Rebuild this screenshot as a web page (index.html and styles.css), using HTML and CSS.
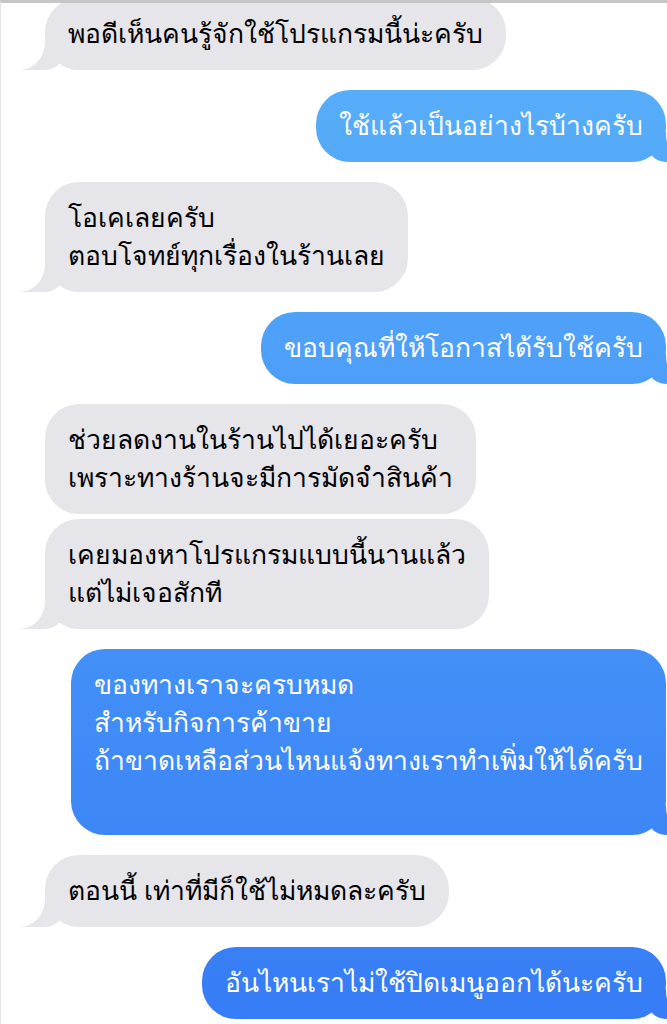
FILE: index.html
```html
<!DOCTYPE html>
<html>
<head>
    <title>แชท</title>
    <meta charset="utf-8">
    <link rel="stylesheet" href="styles.css">
</head>
<body>
    <div id="frame">
        <div class="chat">
            <div class="msg them">พอดีเห็นคนรู้จักใช้โปรแกรมนี้น่ะครับ</div>
            <div class="msg me">ใช้แล้วเป็นอย่างไรบ้างครับ</div>
            <div class="msg them">โอเคเลยครับ<br>ตอบโจทย์ทุกเรื่องในร้านเลย</div>
            <div class="msg me">ขอบคุณที่ให้โอกาสได้รับใช้ครับ</div>
            <!-- same sender twice: first one has no tail -->
            <div class="msg them notail">ช่วยลดงานในร้านไปได้เยอะครับ<br>เพราะทางร้านจะมีการมัดจำสินค้า</div>
            <div class="msg them">เคยมองหาโปรแกรมแบบนี้นานแล้ว<br>แต่ไม่เจอสักที</div>
            <div class="msg me">ของทางเราจะครบหมด<br>สำหรับกิจการค้าขาย<br>ถ้าขาดเหลือส่วนไหนแจ้งทางเราทำเพิ่มให้ได้ครับ<br>&nbsp;</div>
            <div class="msg them">ตอนนี้ เท่าที่มีก็ใช้ไม่หมดละครับ</div>
            <div class="msg me">อันไหนเราไม่ใช้ปิดเมนูออกได้นะครับ</div>
        </div>
    </div>
</body>
</html>
```
FILE: styles.css
```css
html, body {
    margin: 0;
    padding: 0;
    background: #fff;
    font-family: "Liberation Sans", sans-serif;
}

/*** page frame, clips the tails on the right ***/
#frame {
    height: 1021px;
    border-top: 3px solid #c6c6c6;
    border-left: 1px solid #e4e4e4;
    overflow: hidden;
}

.chat {
    display: flex;
    flex-direction: column;
    gap: 20px;
    margin-top: -5px;
    padding: 0 1px 0 44px;
}

/*** bubbles ***/
.msg {
    position: relative;
    z-index: 0;
    padding: 17px 23px;
    border-radius: 34px;
    font-size: 26.5px;
    line-height: 38px;
    white-space: nowrap;
}
.them {
    align-self: flex-start;
    background: #e5e5ea;
    color: #000;
}
.me {
    align-self: flex-end;
    color: #fff;
    /* colour depends on height on screen, like the phone */
    background: linear-gradient(to bottom, #5ab2f9, #367cf6);
    background-attachment: fixed;
}
.notail { margin-bottom: -15px; }

/*** tails: coloured block + white block with round corner on top ***/
.msg:before, .msg:after {
    content: "";
    position: absolute;
    bottom: 0;
    height: 30px;
    z-index: -1;
}
.them:before {
    left: -25px;
    width: 40px;
    background: #e5e5ea;
    border-bottom-right-radius: 16px 10px;
}
.them:after {
    left: -30px;
    width: 30px;
    background: #fff;
    border-bottom-right-radius: 25px 28px;
}
.me:before {
    right: -25px;
    width: 40px;
    background: linear-gradient(to bottom, #5ab2f9, #367cf6);
    background-attachment: fixed;
    border-bottom-left-radius: 16px 10px;
}
.me:after {
    right: -30px;
    width: 30px;
    background: #fff;
    border-bottom-left-radius: 25px 28px;
}
.notail:before, .notail:after { display: none; }
```
